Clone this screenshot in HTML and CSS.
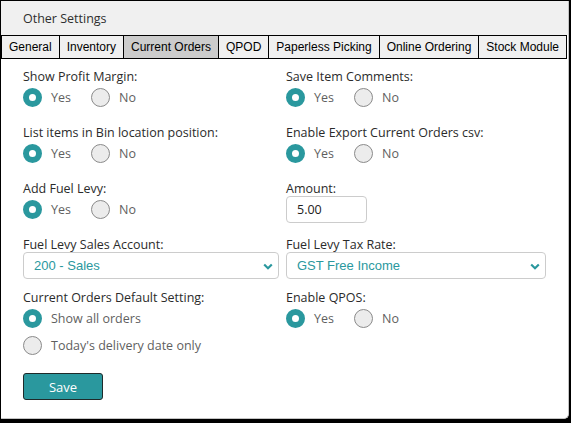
FILE: index.html
```html
<!DOCTYPE html>
<html>
<head>
<meta charset="utf-8">
<link rel="stylesheet" href="styles.css">
</head>
<body>
<div class="panel">
  <div class="header">Other Settings</div>
  <div class="tabs">
    <div class="tab">General</div>
    <div class="tab">Inventory</div>
    <div class="tab active">Current Orders</div>
    <div class="tab">QPOD</div>
    <div class="tab">Paperless Picking</div>
    <div class="tab">Online Ordering</div>
    <div class="tab">Stock Module</div>
  </div>
  <div class="content">
    <div class="row">
      <div class="field">
        <div class="label">Show Profit Margin:</div>
        <div class="radios">
          <span class="opt"><span class="radio on"></span>Yes</span>
          <span class="opt"><span class="radio"></span>No</span>
        </div>
      </div>
      <div class="field">
        <div class="label">Save Item Comments:</div>
        <div class="radios">
          <span class="opt"><span class="radio on"></span>Yes</span>
          <span class="opt"><span class="radio"></span>No</span>
        </div>
      </div>
    </div>
    <div class="row">
      <div class="field">
        <div class="label">List items in Bin location position:</div>
        <div class="radios">
          <span class="opt"><span class="radio on"></span>Yes</span>
          <span class="opt"><span class="radio"></span>No</span>
        </div>
      </div>
      <div class="field">
        <div class="label">Enable Export Current Orders csv:</div>
        <div class="radios">
          <span class="opt"><span class="radio on"></span>Yes</span>
          <span class="opt"><span class="radio"></span>No</span>
        </div>
      </div>
    </div>
    <div class="row">
      <div class="field">
        <div class="label">Add Fuel Levy:</div>
        <div class="radios">
          <span class="opt"><span class="radio on"></span>Yes</span>
          <span class="opt"><span class="radio"></span>No</span>
        </div>
      </div>
      <div class="field">
        <div class="label">Amount:</div>
        <input class="input" type="text" value="5.00">
      </div>
    </div>
    <div class="row row-tight">
      <div class="field">
        <div class="label">Fuel Levy Sales Account:</div>
        <div class="select">
          <span>200 - Sales</span>
          <svg class="chev" width="10" height="7" viewBox="0 0 10 7"><path d="M1.2 1.5 L5 5.2 L8.8 1.5" fill="none" stroke="#2a989e" stroke-width="2.2"/></svg>
        </div>
      </div>
      <div class="field">
        <div class="label">Fuel Levy Tax Rate:</div>
        <div class="select">
          <span>GST Free Income</span>
          <svg class="chev" width="10" height="7" viewBox="0 0 10 7"><path d="M1.2 1.5 L5 5.2 L8.8 1.5" fill="none" stroke="#2a989e" stroke-width="2.2"/></svg>
        </div>
      </div>
    </div>
    <div class="row">
      <div class="field">
        <div class="label">Current Orders Default Setting:</div>
        <div class="radios">
          <span class="opt"><span class="radio on"></span>Show all orders</span>
        </div>
        <div class="radios">
          <span class="opt"><span class="radio"></span>Today's delivery date only</span>
        </div>
      </div>
      <div class="field">
        <div class="label">Enable QPOS:</div>
        <div class="radios">
          <span class="opt"><span class="radio on"></span>Yes</span>
          <span class="opt"><span class="radio"></span>No</span>
        </div>
      </div>
    </div>
    <button class="save">Save</button>
  </div>
</div>
</body>
</html>
```
FILE: styles.css
```css
html, body {
  margin: 0;
  padding: 0;
  background: #000;
}
body {
  padding: 1px 0 0 1px;
  font-family: "Open Sans", "Noto Sans", sans-serif;
  font-size: 12.5px;
}
.panel {
  width: 568px;
  height: 418px;
  box-sizing: border-box;
  background: #fff;
  border-right: 1px solid #c4c4c4;
  border-bottom: 1px solid #c4c4c4;
  border-radius: 0 0 5px 0;
  overflow: hidden;
}
.header {
  height: 34px;
  background: #f0f0f0;
  padding-left: 22px;
  display: flex;
  align-items: center;
  color: #2e2e2e;
  font-size: 12.5px;
}
.tabs {
  display: flex;
  width: 566px;
  background: #f0f0f0;
}
.tab {
  flex: 1 1 auto;
  height: 24px;
  box-sizing: border-box;
  border: 1px solid #000;
  border-left: none;
  padding: 0 6px;
  display: flex;
  align-items: center;
  justify-content: center;
  font-family: "Liberation Sans", Arial, sans-serif;
  font-size: 12px;
  color: #000;
  white-space: nowrap;
}
.tab:first-child {
  border-left: 1px solid #000;
}
.tab.active {
  background: #cccccc;
}
.content {
  padding: 10px 0 0 22px;
}
.row {
  display: grid;
  grid-template-columns: 256px 260px;
  column-gap: 7px;
  margin-bottom: 14px;
}
.row.row-tight {
  margin-bottom: 11px;
}
.label {
  line-height: 15px;
  color: #2b2b2b;
}
.radios {
  display: flex;
  align-items: center;
  height: 27px;
  color: #5f5f5f;
}
.opt {
  display: inline-flex;
  align-items: center;
  margin-right: 20px;
}
.radio {
  width: 19px;
  height: 19px;
  box-sizing: border-box;
  border-radius: 50%;
  border: 1px solid #8a8a8a;
  background: #ececec;
  margin-right: 9px;
}
.radio.on {
  border: 6px solid #2a989e;
  background: #fff;
}
.input {
  display: block;
  width: 81px;
  height: 27px;
  box-sizing: border-box;
  border: 1px solid #cccccc;
  border-radius: 4px;
  padding: 0 0 0 10px;
  font-family: "Open Sans", "Noto Sans", sans-serif;
  font-size: 12.5px;
  color: #222;
  margin: 0;
}
.select {
  position: relative;
  height: 27px;
  box-sizing: border-box;
  border: 1px solid #cccccc;
  border-radius: 4px;
  padding-left: 10px;
  display: flex;
  align-items: center;
  font-family: "Liberation Sans", Arial, sans-serif;
  font-size: 13px;
  color: #2a989e;
}
.chev {
  position: absolute;
  right: 5px;
  top: 10px;
}
.save {
  margin-top: 0;
  width: 80px;
  height: 27px;
  background: #2a989e;
  border: 1px solid #1f2a2a;
  border-radius: 3px;
  color: #fff;
  font-family: "Open Sans", "Noto Sans", sans-serif;
  font-size: 13px;
  padding: 0;
}
```
